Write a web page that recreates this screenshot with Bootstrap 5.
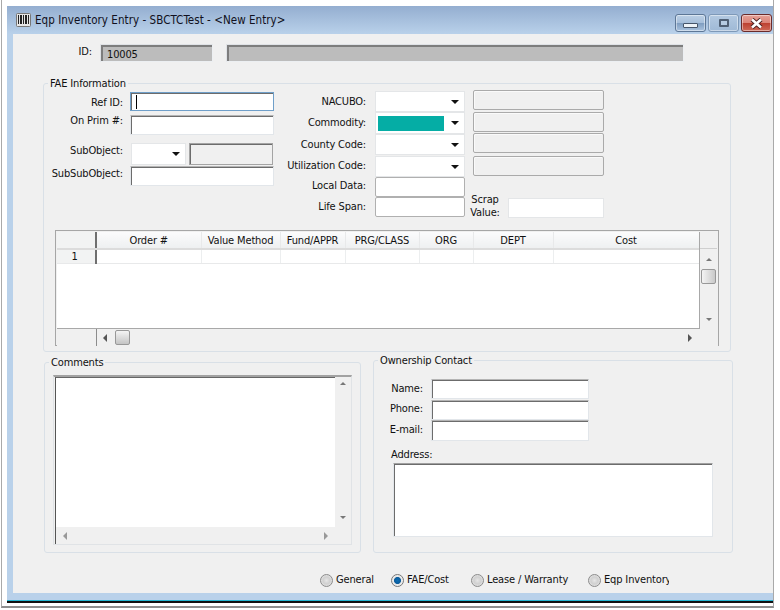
<!DOCTYPE html>
<html lang="en">
<head>
<meta charset="utf-8">
<title>Eqp Inventory Entry</title>
<link href="https://cdn.jsdelivr.net/npm/bootstrap@5.3.0/dist/css/bootstrap.min.css" rel="stylesheet">
<style>
html,body{margin:0;padding:0;background:#fff;overflow:hidden}
body{font-family:"DejaVu Sans Condensed","DejaVu Sans",sans-serif;font-stretch:condensed;font-size:11px;line-height:14px;color:#111;letter-spacing:-.15px}
.frame{width:773px;height:608px;border-left:1px solid #a9a9a9;border-right:1px solid #a9a9a9;border-bottom:2px solid #8e8e8e;margin-left:1px;padding:6px 0 0 5px;box-sizing:border-box}
.win{width:766px;height:596px}
.tbar{height:28px;background:linear-gradient(#94aed0,#b9d1ea);padding-left:9px}
.ttext{font-size:11.5px;margin-left:4px;color:#101020;letter-spacing:.05px}
.tbtn{width:31px;height:18px;border:1px solid #5d7796;border-radius:3px;background:linear-gradient(#bcd0e6 0,#a7bfda 48%,#7f9dc0 52%,#aac3df 100%);box-shadow:inset 0 0 0 1px rgba(255,255,255,.45)}
.tbtn.dim{border-color:#7e99b8;background:linear-gradient(#b3c9e1,#9fb9d6)}
.tbtn.cls{border-color:#6a2b2b;background:linear-gradient(#e5a198 0,#dc8478 48%,#bd4131 52%,#cf6a58 100%)}
.tbtns{margin-top:8px;margin-right:1px;gap:2px}
.glmin{width:15px;height:5px;margin-top:5px;background:#eef3f8;border:1px solid #47566a;border-radius:1px}
.glmax{width:10px;height:8px;border:2px solid #4f5f74;background:#b6cbe2;border-radius:1px}
.client{height:559px;background:#f0f0f0;border-left:6px solid #b9d1ea;box-sizing:content-box}
.bot{height:7px;background:#b9d1ea;border-bottom:1px solid #25b6d2;box-sizing:content-box}
.botk{height:2px;background:#111}
.toprow{padding-top:10px}
.idlab{width:79px;text-align:right;padding-bottom:3px}
.fld{box-sizing:border-box;background:#fff;border:1px solid #e2e6ea;border-top-color:#b4b4b4;box-shadow:inset 1px 1px 0 #6c6c6c}
.fld.grey{background:#bcbcbc;border-color:#dfe2e6 #eceff2 #eceff2 #dfe2e6;box-shadow:inset 2px 2px 0 #7d7d7d}
.fld.flat{background:#f0f0f0;border:1px solid #aaa;border-radius:2px;box-shadow:inset 1px 1px 0 #fafafa}
.fld.flat2{background:#f0f0f0;border:1px solid #a4a4a4;box-shadow:inset 1px 1px 0 #6c6c6c}
.fld.box{border:1px solid #b0b0b0;border-radius:2px;box-shadow:none}
.fld.plain{border:1px solid #e4e6e8;box-shadow:none}
.fld.focus{border-color:#6f9fc9}
.caret{display:block;width:1px;height:14px;background:#000;margin:2px 0 0 5px}
.idv{width:113px;height:18px;padding:3px 0 0 6px}
.desc{width:458px;height:18px;margin-left:13px}
fieldset.grp{border:1px solid #d9e0e7;border-radius:3px;box-sizing:border-box;padding:0;min-width:0}
fieldset.grp>legend{float:none;width:auto;font-size:11px;line-height:14px;margin:0 0 0 4px;padding:0 2px;position:relative;top:1px}
fieldset.fae{width:688px;height:276px;margin:14px 0 0 30px}
.top3{height:140px}
.cola{width:230px}
.colb{width:191px;margin-top:1px}
.colc{width:131px;margin-left:8px}
.lab{text-align:right;flex:none}
.la{width:79px;margin-right:7px}
.lb{width:92px;margin-right:9px}
.up8{padding-bottom:8px}
.up6{padding-bottom:6px}
.up4{padding-bottom:4px}
.up2{padding-bottom:2px}
.dn2{padding-top:2px}
.w144{width:144px;flex:none}
.sub84{width:84px;flex:none}
.mt1x{margin-top:1px}.mt2x{margin-top:2px}.mt3x{margin-top:3px}.mt7x{margin-top:7px}
.h19{height:19px}.h20{height:20px}.h21{height:21px}.h22{height:22px}
.combo{box-sizing:border-box;width:90px;background:#fff;border:1px solid #e4e6e8;padding:2px 5px 2px 2px;gap:7px}
.combo.sm{width:55px;margin-left:1px;margin-right:3px}
.tri{width:0;height:0;border-left:4px solid transparent;border-right:4px solid transparent;border-top:4px solid #111}
.teal{width:67px;height:15px;background:#05ada5;margin:0}
.scrap{width:30px;margin:-5px 8px 0 -3px;text-align:center;line-height:13px}
.scraprow{margin-top:22px;height:28px}
.gridb{width:664px;height:116px;margin:0 0 0 11px;border:1px solid #a6a6a6;padding:1px 0 0 1px;box-sizing:border-box;display:grid;grid-template-columns:643px 1fr;grid-template-rows:97px 1fr}
.cells{background:#fff;border-right:1px solid #a8a8a8;border-bottom:1px solid #a8a8a8;overflow:hidden}
table.gt{border-collapse:collapse;table-layout:fixed;width:642px}
table.gt th{height:17px;padding:2px 0 0;font-weight:400;text-align:center;background:linear-gradient(#fbfbfc,#eef0f1);border-right:1px solid #e8e9ea;border-bottom:2px solid #dcdcdc}
table.gt td{height:14px;padding:0;border-right:1px solid #eceeef;border-bottom:1px solid #e8e9ea}
table.gt th.rh,table.gt td.rh{background:#f2f3f3;border-right:2px solid #6f6f6f;text-align:center;padding-right:3px}
table.gt td.rh{line-height:13px}
.vs{width:17px;background:#f0f0f0;flex:none}
.corner{height:17px;border-bottom:1px solid #cfcfcf}
.arr{height:13px}
.arrup{margin-top:4px}
.arrdn{margin-bottom:3px}
.tup{width:0;height:0;border-left:3px solid transparent;border-right:3px solid transparent;border-bottom:3px solid #777}
.tdn{width:0;height:0;border-left:3px solid transparent;border-right:3px solid transparent;border-top:3px solid #777}
.tlt{width:0;height:0;border-top:4px solid transparent;border-bottom:4px solid transparent;border-right:4px solid #555}
.trt{width:0;height:0;border-top:4px solid transparent;border-bottom:4px solid transparent;border-left:4px solid #555}
.pale.tlt{border-right-color:#999}.pale.trt{border-left-color:#999}
.thumb{background:linear-gradient(90deg,#f4f4f4,#c9c9c9);border:1px solid #989898;border-radius:2px;box-sizing:border-box}
.thv{width:15px;height:15px;margin:3px 0 0 1px}
.thh{width:15px;height:15px;background:linear-gradient(#f4f4f4,#c4c4c4);margin-left:8px}
.hs{background:#f0f0f0;height:17px}
.hsgap{width:39px;height:100%;border-right:1px solid #8c8c8c;box-sizing:content-box}
.tlwrap{margin-left:6px}
.hsr{margin-right:8px}
.lower{margin-left:31px}
fieldset.cmt{width:317px;height:198px;margin:3px 0 0 0}
.cbox{width:299px;height:170px;margin:6px 0 0 8px;border:1px solid #e0e3e6;border-top:2px solid #a2a2a2;box-sizing:border-box;padding:0 1px 0 1px;display:grid;grid-template-columns:280px 1fr;grid-template-rows:150px 1fr;background:#f0f0f0}
.cwhite{background:#fff;border-left:1px solid #555;border-top:1px solid #666}
.cv{width:15px;padding-top:5px}
.ch{height:17px;border-left:1px solid #555;width:280px;padding:0 7px}
fieldset.own{width:360px;height:200px;margin:1px 0 0 12px}
.ol{width:49px;margin-right:8px}
.ofs{width:158px}
.omt{margin-top:12px}
.addr{margin:7px 0 1px 17px}
.atx{width:320px;height:74px;margin-left:19px;border-top-color:#a0a0a0}
.foot{margin:20px 0 0 307px;height:14px}
.ritem{flex:none;white-space:nowrap;overflow:hidden;align-items:center;gap:3px}
.r71{width:71px}.r80{width:80px}.r117{width:117px}.r81{width:81px}
input.rd{width:13px;height:13px;margin:0;flex:none;border:1px solid #8b8b8b;background:radial-gradient(circle at 50% 50%,#e6e6e6 0,#d0d0d0 45%,#f3f3f3 100%);opacity:1}
input.rd:checked{background-color:#f0f0f0;background-image:radial-gradient(circle at 50% 50%,#0a6cb4 0,#0c5d9c 40%,#e8e8e8 50%,#f5f5f5 100%);border-color:#777}
.flex-none{flex:none}
</style>
</head>
<body>
<div class="frame">
 <div class="win">
  <div class="tbar d-flex">
   <svg width="15" height="14" viewBox="0 0 15 14" class="align-self-center flex-none" aria-hidden="true"><rect x=".5" y=".5" width="14" height="13" rx="1" fill="#e6e6e6" stroke="#777"/><path d="M2.500 2v9M4.500 2v9M5.500 2v9M7.500 2v9M9.500 2v9M10.500 2v9M12.500 2v9" stroke="#222" fill="none"/></svg>
   <div class="ttext align-self-center">Eqp Inventory Entry - SBCTCTest - &lt;New Entry&gt;</div>
   <div class="tbtns d-flex ms-auto align-self-start">
    <div class="tbtn d-flex justify-content-center align-items-center"><div class="glmin"></div></div>
    <div class="tbtn dim d-flex justify-content-center align-items-center"><div class="glmax"></div></div>
    <div class="tbtn cls d-flex justify-content-center align-items-center"><svg width="15" height="11" viewBox="0 0 15 11" aria-hidden="true"><path d="M3 1.500 L12 9.500 M12 1.500 L3 9.500" stroke="#4d2020" stroke-width="4.500"/><path d="M3 1.500 L12 9.500 M12 1.500 L3 9.500" stroke="#fff" stroke-width="2.600"/></svg></div>
   </div>
  </div>
  <div class="client">
   <div class="toprow d-flex align-items-center">
    <div class="idlab">ID:</div>
    <div class="fld grey idv ms-2">10005</div>
    <div class="fld grey desc"></div>
   </div>
   <fieldset class="grp fae">
    <legend>FAE Information</legend>
    <div class="top3 d-flex">
     <div class="cola d-flex flex-column">
      <div class="d-flex align-items-center mt2x"><div class="lab la dn2">Ref ID:</div><div class="fld focus w144 h19"><span class="caret"></span></div></div>
      <div class="d-flex align-items-center mt3x"><div class="lab la up8">On Prim #:</div><div class="fld w144 h20"></div></div>
      <div class="d-flex align-items-center mt7x"><div class="lab la up6">SubObject:</div><div class="combo sm d-flex align-items-center justify-content-end h22"><span class="tri"></span></div><div class="fld flat2 h22 sub84"></div></div>
      <div class="d-flex align-items-center mt1x"><div class="lab la up4">SubSubObject:</div><div class="fld w144 h20"></div></div>
     </div>
     <div class="colb d-flex flex-column">
      <div class="d-flex align-items-center"><div class="lab lb">NACUBO:</div><div class="combo d-flex align-items-center justify-content-end h21"><span class="tri"></span></div></div>
      <div class="d-flex align-items-center"><div class="lab lb">Commodity:</div><div class="combo d-flex align-items-center justify-content-end h22"><span class="teal"></span><span class="tri"></span></div></div>
      <div class="d-flex align-items-center"><div class="lab lb">County Code:</div><div class="combo d-flex align-items-center justify-content-end h21"><span class="tri"></span></div></div>
      <div class="d-flex align-items-center mt1x"><div class="lab lb up2">Utilization Code:</div><div class="combo d-flex align-items-center justify-content-end h21"><span class="tri"></span></div></div>
      <div class="d-flex align-items-center"><div class="lab lb up2">Local Data:</div><div class="fld box combo h20"></div></div>
      <div class="d-flex align-items-center"><div class="lab lb">Life Span:</div><div class="fld box combo h20"></div></div>
     </div>
     <div class="colc d-flex flex-column">
      <div class="fld flat h20"></div>
      <div class="fld flat h20 mt2x"></div>
      <div class="fld flat h20 mt1x"></div>
      <div class="fld flat h20 mt3x"></div>
      <div class="d-flex align-items-start scraprow">
       <div class="scrap">Scrap Value:</div>
       <div class="fld plain h20 flex-grow-1"></div>
      </div>
     </div>
    </div>
    <div class="gridb">
     <div class="cells">
      <table class="gt">
       <colgroup><col style="width:39px"><col style="width:105px"><col style="width:79px"><col style="width:65px"><col style="width:74px"><col style="width:54px"><col style="width:80px"><col style="width:146px"></colgroup>
       <tr><th class="rh"></th><th>Order #</th><th>Value Method</th><th>Fund/APPR</th><th>PRG/CLASS</th><th>ORG</th><th>DEPT</th><th>Cost</th></tr>
       <tr><td class="rh">1</td><td></td><td></td><td></td><td></td><td></td><td></td><td></td></tr>
      </table>
     </div>
     <div class="vs d-flex flex-column">
      <div class="corner"></div>
      <div class="arr arrup d-flex align-items-center justify-content-center"><span class="tup"></span></div>
      <div class="thumb thv"></div>
      <div class="arr arrdn d-flex align-items-center justify-content-center mt-auto"><span class="tdn"></span></div>
     </div>
     <div class="hs d-flex align-items-center">
      <div class="hsgap"></div>
      <span class="tlt tlwrap"></span>
      <div class="thumb thh"></div>
      <span class="trt ms-auto hsr"></span>
     </div>
     <div class="hs"></div>
    </div>
   </fieldset>
   <div class="lower d-flex">
    <fieldset class="grp cmt">
     <legend>Comments</legend>
     <div class="cbox">
      <div class="cwhite"></div>
      <div class="cv vs d-flex flex-column align-items-center"><span class="tup"></span><span class="tdn mt-auto mb-2"></span></div>
      <div class="ch d-flex align-items-center justify-content-between"><span class="tlt pale"></span><span class="trt pale"></span></div>
      <div></div>
     </div>
    </fieldset>
    <fieldset class="grp own">
     <legend>Ownership Contact</legend>
     <div class="d-flex align-items-center omt"><div class="lab ol">Name:</div><div class="fld ofs h20"></div></div>
     <div class="d-flex align-items-center mt1x"><div class="lab ol up2">Phone:</div><div class="fld ofs h20"></div></div>
     <div class="d-flex align-items-center"><div class="lab ol up2">E-mail:</div><div class="fld ofs h21"></div></div>
     <div class="addr">Address:</div>
     <div class="fld atx"></div>
    </fieldset>
   </div>
   <div class="foot d-flex">
    <label class="ritem r71 d-flex"><input class="form-check-input rd" type="radio" name="pg">General</label>
    <label class="ritem r80 d-flex"><input class="form-check-input rd" type="radio" name="pg" checked>FAE/Cost</label>
    <label class="ritem r117 d-flex"><input class="form-check-input rd" type="radio" name="pg">Lease / Warranty</label>
    <label class="ritem r81 d-flex"><input class="form-check-input rd" type="radio" name="pg">Eqp Inventory</label>
   </div>
  </div>
  <div class="bot"></div>
  <div class="botk"></div>
 </div>
</div>
<script src="https://cdn.jsdelivr.net/npm/bootstrap@5.3.0/dist/js/bootstrap.bundle.min.js"></script>
</body>
</html>
